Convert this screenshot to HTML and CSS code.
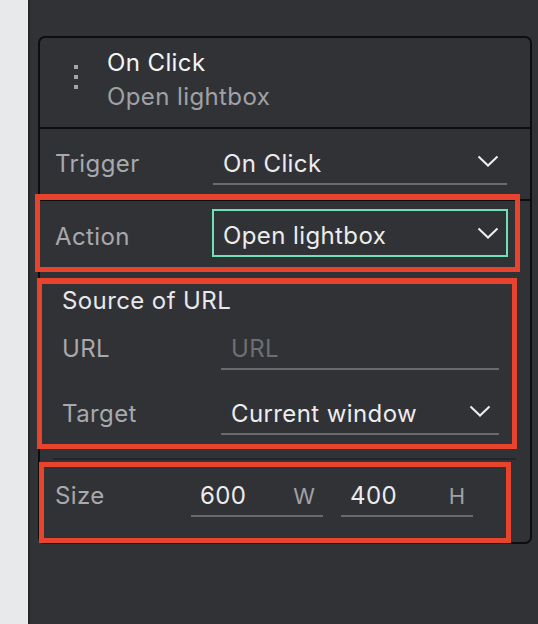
FILE: index.html
```html
<!DOCTYPE html>
<html lang="en">
<head>
<meta charset="utf-8">
<title>Interaction panel</title>
<link rel="stylesheet" href="styles.css">
</head>
<body>
<div class="app">
  <div class="rail"></div>
  <div class="panel">
    <div class="card">
      <div class="card-head">
        <div class="grip"><span></span><span></span><span></span></div>
        <div class="head-text">
          <div class="head-title">On Click</div>
          <div class="head-sub">Open lightbox</div>
        </div>
      </div>

      <div class="row row-trigger">
        <div class="label label-trigger">Trigger</div>
        <div class="field select">
          <span class="value">On Click</span>
          <svg class="chev" width="22" height="12" viewBox="0 0 22 12"><polyline points="1.5,1.5 11,10.5 20.5,1.5"/></svg>
        </div>
      </div>

      <div class="row row-action">
        <div class="label label-action">Action</div>
        <div class="select-box">
          <span class="value">Open lightbox</span>
          <svg class="chev" width="22" height="12" viewBox="0 0 22 12"><polyline points="1.5,1.5 11,10.5 20.5,1.5"/></svg>
        </div>
        <div class="mark mark-action"></div>
      </div>

      <div class="group">
        <div class="group-title">Source of URL</div>
        <div class="group-row">
          <div class="label label-group">URL</div>
          <div class="field"><span class="placeholder">URL</span></div>
        </div>
        <div class="group-row">
          <div class="label label-group">Target</div>
          <div class="field select">
            <span class="value">Current window</span>
            <svg class="chev" width="22" height="12" viewBox="0 0 22 12"><polyline points="1.5,1.5 11,10.5 20.5,1.5"/></svg>
          </div>
        </div>
        <div class="mark mark-source"></div>
      </div>

      <div class="size">
        <div class="size-divider"></div>
        <div class="size-row">
          <div class="label label-size">Size</div>
          <div class="field num"><span class="value">600</span><span class="suffix">W</span></div>
          <div class="field num"><span class="value">400</span><span class="suffix">H</span></div>
        </div>
        <div class="mark mark-size"></div>
      </div>
    </div>
  </div>
</div>
</body>
</html>
```

FILE: styles.css
```css
* { box-sizing: border-box; }

html, body {
  margin: 0;
  padding: 0;
  background: #313236;
}

body {
  font-family: Inter, "Noto Sans", "Liberation Sans", sans-serif;
  font-size: 24px;
  line-height: 29px;
  letter-spacing: 0.4px;
  color: #ececee;
}

.app {
  display: flex;
  width: 538px;
  height: 624px;
  overflow: hidden;
}

.rail {
  width: 30px;
  flex: none;
  background: #e8e9eb;
  border-right: 2px solid #26272b;
}

.panel {
  flex: 1;
  padding: 36px 0 0 8px;
}

.card {
  position: relative;
  width: 494px;
  height: 508px;
  border: 2px solid #0c0d0e;
  border-radius: 7px;
  background: #313236;
}

/* header */
.card-head {
  display: flex;
  align-items: center;
  gap: 29px;
  height: 91px;
  padding: 6px 0 17px 34px;
  border-bottom: 2px solid #0c0d0e;
}

.grip {
  display: flex;
  flex-direction: column;
  gap: 6px;
}

.grip span {
  display: block;
  width: 4px;
  height: 4px;
  background: #a3a4a8;
}

.head-text {
  line-height: 34px;
  padding-top: 3px;
  margin-bottom: -3px;
}

.head-title {
  color: #f4f4f5;
}

.head-sub {
  color: #a0a1a5;
}

/* generic */
.label {
  flex: none;
  padding-top: 5px;
  color: #a8a9ad;
}

.value {
  color: #ececee;
  white-space: nowrap;
}

.placeholder {
  color: #6e6f73;
}

.field {
  flex: 1;
  display: flex;
  align-items: center;
  height: 41px;
  padding: 5px 0 5px 10px;
  border-bottom: 2px solid #696a6e;
}

.field.select {
  justify-content: space-between;
}

.chev {
  flex: none;
  margin-right: 8px;
  margin-top: -5px;
}

.chev polyline {
  fill: none;
  stroke: #eeeeef;
  stroke-width: 2;
}

/* trigger */
.row {
  position: relative;
  display: flex;
}

.row-trigger {
  height: 72px;
  padding: 15px 23px 0 15px;
  align-items: flex-start;
  border-bottom: 2px solid #0c0d0e;
}

.label-trigger { width: 158px; }

/* action */
.row-action {
  height: 72px;
  padding: 8px 22px 0 15px;
  align-items: flex-start;
}

.label-action {
  width: 157px;
  padding-top: 13px;
}

.select-box {
  flex: 1;
  display: flex;
  align-items: center;
  justify-content: space-between;
  height: 48px;
  padding: 10px 0 5px 9px;
  border: 2px solid #6fe2b5;
}

.select-box .chev { margin-right: 7px; margin-top: -5px; }

/* source group */
.group {
  position: relative;
  height: 176px;
  padding: 13px 31px 0 22px;
}

.group-title {
  color: #e8e8ea;
  margin-bottom: 14px;
}

.group-row {
  display: flex;
  align-items: flex-start;
  margin-bottom: 24px;
}

.label-group { width: 159px; }

/* size */
.size {
  position: relative;
  height: 89px;
  padding-top: 9px;
}

.size-divider {
  height: 2px;
  margin: 0 14px 0 13px;
  background: #242529;
}

.size-row {
  display: flex;
  align-items: flex-start;
  gap: 18px;
  margin-top: 16px;
  padding-left: 15px;
}

.label-size {
  width: 118px;
}

.field.num {
  flex: none;
  width: 132px;
  align-items: baseline;
  justify-content: space-between;
  padding-left: 9px;
  padding-right: 8px;
}

.suffix {
  font-size: 22px;
  letter-spacing: 0;
  color: #a0a1a5;
}

/* annotation overlays */
.mark {
  position: absolute;
  border: 5px solid #e8432c;
  pointer-events: none;
}

.mark-action {
  left: -5px;
  top: -7px;
  right: 10px;
  bottom: 1px;
  border-top-width: 6px;
}

.mark-source {
  left: -3px;
  top: 5px;
  right: 13px;
  bottom: 0;
  border-top-width: 6px;
}

.mark-size {
  left: -1px;
  top: 13px;
  right: 19px;
  bottom: -5px;
}
```
